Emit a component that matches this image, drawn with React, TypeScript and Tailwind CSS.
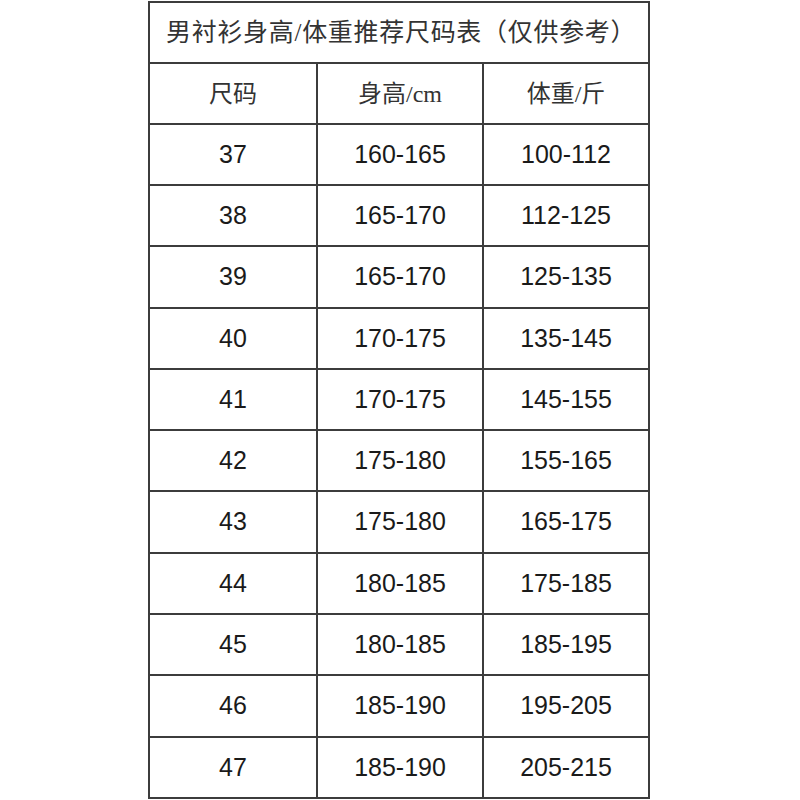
const rows: [string, string, string][] = [
  ["37", "160-165", "100-112"],
  ["38", "165-170", "112-125"],
  ["39", "165-170", "125-135"],
  ["40", "170-175", "135-145"],
  ["41", "170-175", "145-155"],
  ["42", "175-180", "155-165"],
  ["43", "175-180", "165-175"],
  ["44", "180-185", "175-185"],
  ["45", "180-185", "185-195"],
  ["46", "185-190", "195-205"],
  ["47", "185-190", "205-215"],
];

// a few rows are 1px taller so the table fills the picture like the original
const tall = new Set([2, 6, 9]);

const serif = "font-['Liberation_Serif','Noto_Sans_CJK_SC',serif]";
const sans = "font-['Liberation_Sans',Arial,sans-serif]";

export default function App() {
  return (
    <div className="w-[800px] h-[800px] bg-white pt-[1px] pl-[148px]">
      <div className="w-[502px] border-2 border-[#3c3c3c]">
        <div className={`h-[59px] flex items-center pl-[16px] text-[25px] tracking-[0.7px] text-[#333] ${serif}`}>
          男衬衫身高/体重推荐尺码表（仅供参考）
        </div>
        <div className={`grid grid-cols-3 h-[61px] border-t-2 border-[#3c3c3c] text-[24px] text-[#333] ${serif}`}>
          <div className="flex items-center justify-center">尺码</div>
          <div className="flex items-center justify-center border-l-2 border-[#3c3c3c]">身高/cm</div>
          <div className="flex items-center justify-center border-l-2 border-[#3c3c3c]">体重/斤</div>
        </div>
        {rows.map((r, i) => (
          <div
            key={i}
            className={`grid grid-cols-3 ${tall.has(i) ? "h-[62px]" : "h-[61px]"} border-t-2 border-[#3c3c3c] text-[25px] text-[#1a1a1a] ${sans}`}
          >
            <div className="flex items-center justify-center">{r[0]}</div>
            <div className="flex items-center justify-center border-l-2 border-[#3c3c3c]">{r[1]}</div>
            <div className="flex items-center justify-center border-l-2 border-[#3c3c3c]">{r[2]}</div>
          </div>
        ))}
      </div>
    </div>
  );
}
